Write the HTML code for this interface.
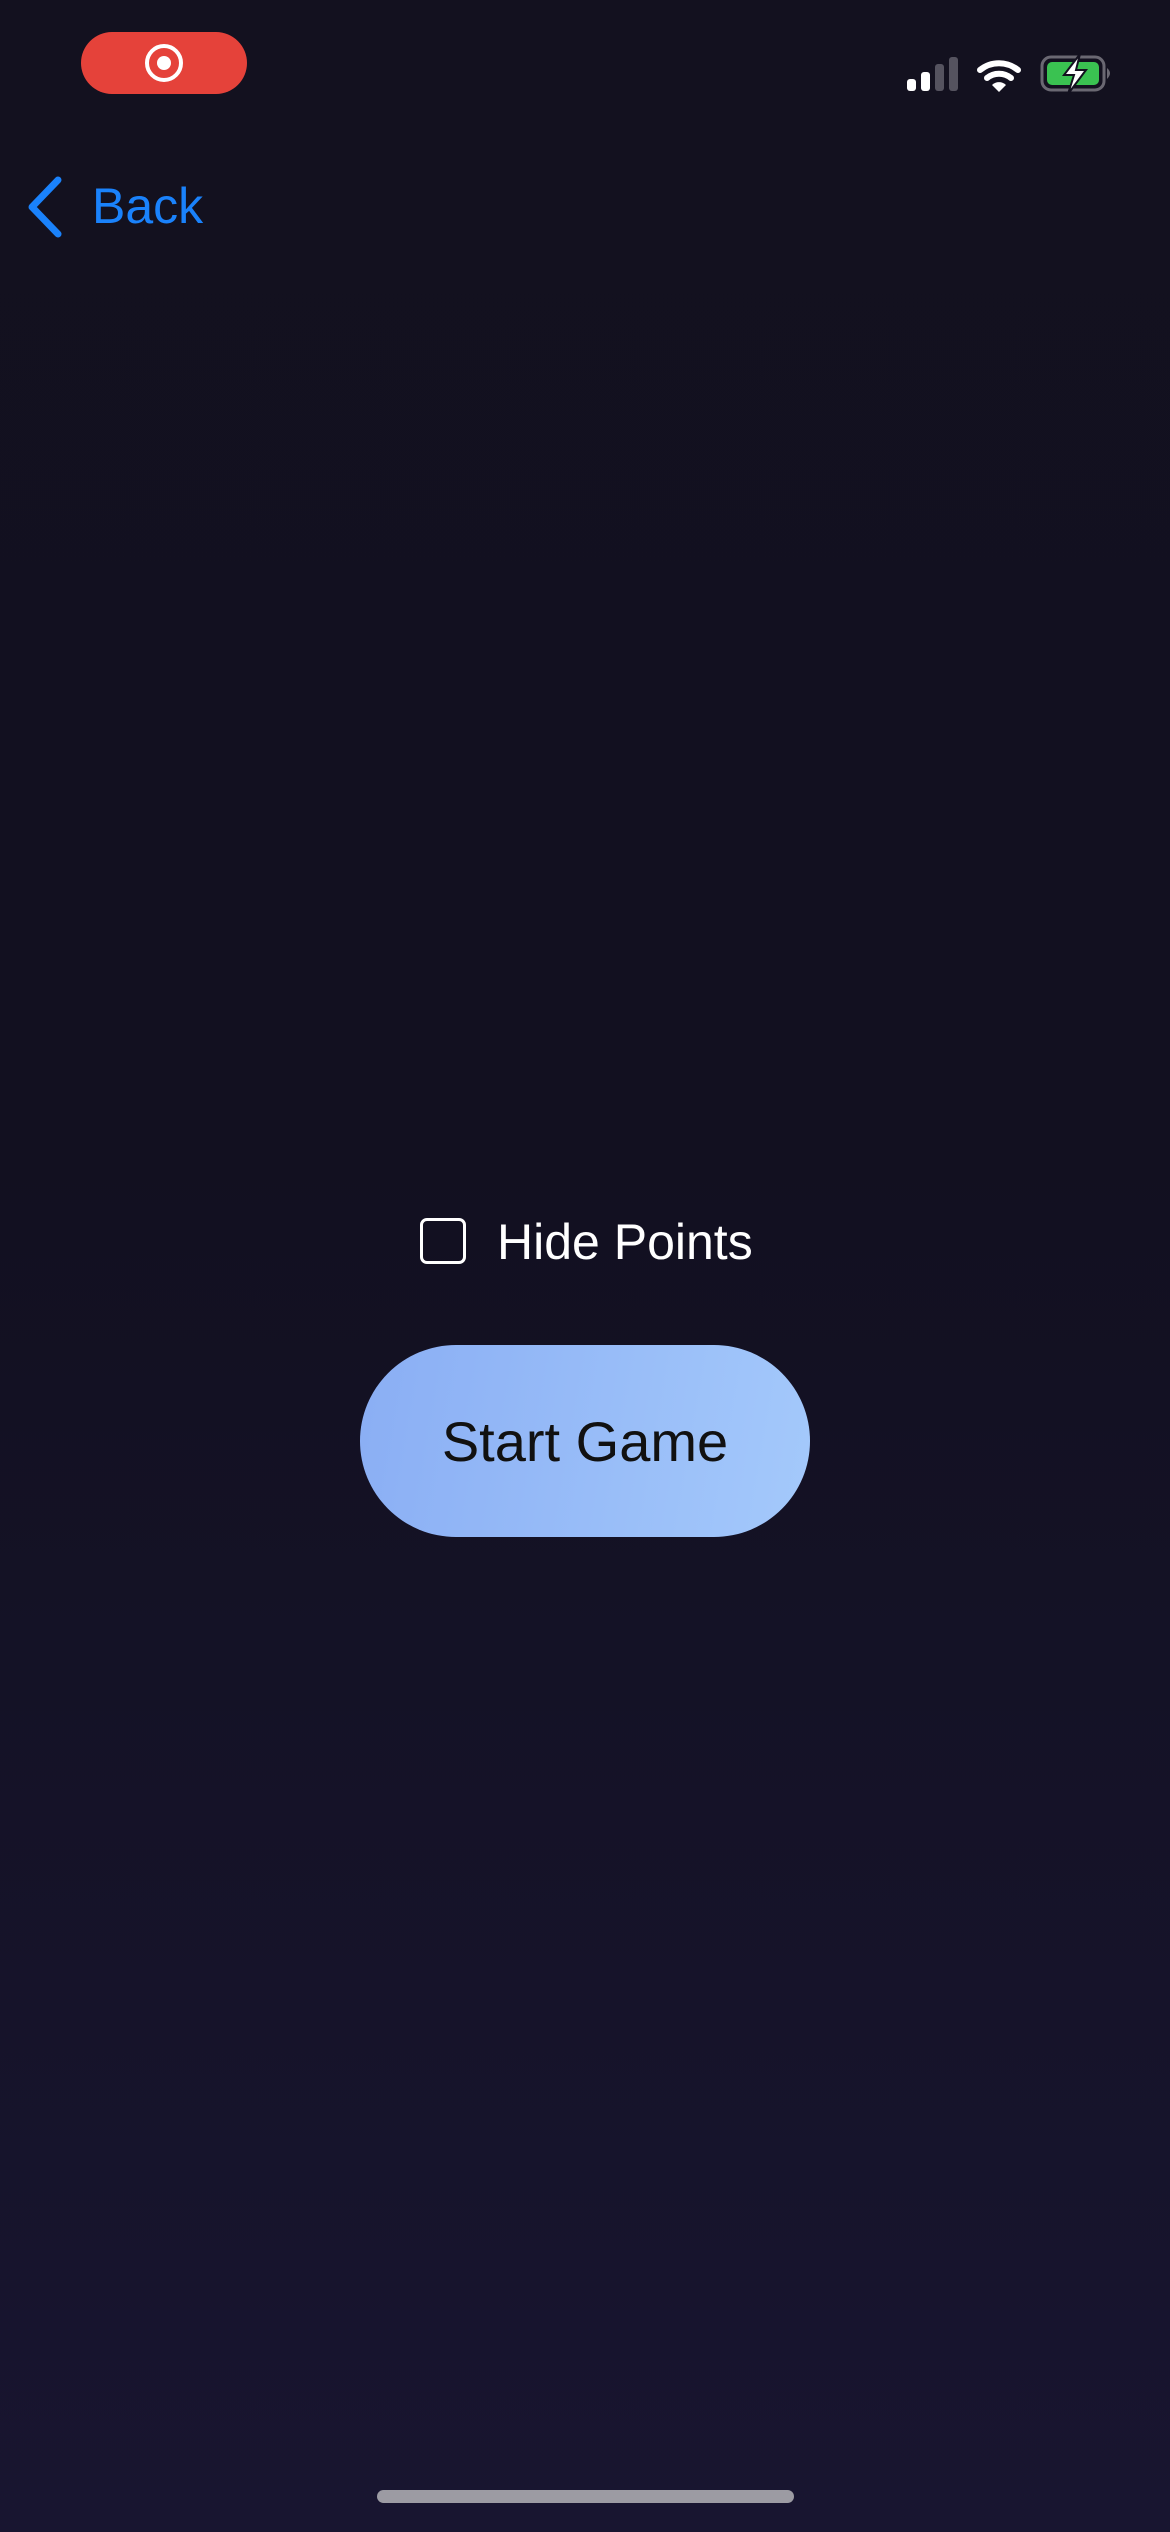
<!DOCTYPE html>
<html><head><meta charset="utf-8"><style>
html,body{margin:0;padding:0}
body{width:1170px;height:2532px;overflow:hidden;position:relative;background:linear-gradient(180deg,#13111f 0%,#121020 45%,#181530 100%);font-family:"Liberation Sans",sans-serif}
.abs{position:absolute}
</style></head><body>
<div class="abs" style="left:81px;top:32px;width:166px;height:62px;border-radius:31px;background:#e5423a"></div>
<svg class="abs" style="left:139px;top:38px" width="50" height="50" viewBox="0 0 50 50"><circle cx="25" cy="25" r="17" fill="none" stroke="#fff" stroke-width="4"/><circle cx="25" cy="25" r="7" fill="#fff"/></svg>
<svg class="abs" style="left:900px;top:50px" width="230" height="50" viewBox="900 50 230 50">
<rect x="907" y="79" width="9" height="12" rx="3" fill="#fff"/>
<rect x="921" y="72" width="9" height="19" rx="3" fill="#fff"/>
<rect x="935" y="64" width="9" height="27" rx="3" fill="#55535f"/>
<rect x="949" y="57" width="9" height="34" rx="3" fill="#55535f"/>
<path d="M980 70 A30 30 0 0 1 1018 70" fill="none" stroke="#fff" stroke-width="6" stroke-linecap="round"/>
<path d="M987 78 A19 19 0 0 1 1011 78" fill="none" stroke="#fff" stroke-width="6" stroke-linecap="round"/>
<path d="M992 85 L999 92 L1006 85 A10 10 0 0 0 992 85Z" fill="#fff"/>
<rect x="1042" y="57" width="62" height="33" rx="9" fill="none" stroke="#6a6872" stroke-width="3"/>
<rect x="1047" y="62" width="52" height="23" rx="5" fill="#3ac251"/>
<path d="M1107 68 q6 5 0 11z" fill="#6a6872"/>
<path d="M1080 54 L1064 75 L1074 75 L1068 94 L1086 70 L1076 70 Z" fill="#fff" stroke="#13111f" stroke-width="2"/>
</svg>
<svg class="abs" style="left:20px;top:172px" width="50" height="70" viewBox="0 0 50 70"><path d="M38 8 L12 35 L38 62" fill="none" stroke="#1a82fb" stroke-width="7" stroke-linecap="round" stroke-linejoin="round"/></svg>
<div class="abs" style="left:92px;top:176px;font-size:50px;color:#1a82fb;line-height:60px">Back</div>
<div class="abs" style="left:420px;top:1218px;width:40px;height:40px;border:3px solid #fff;border-radius:7px"></div>
<div class="abs" style="left:497px;top:1212px;font-size:50px;color:#fff;line-height:60px">Hide Points</div>
<div class="abs" style="left:360px;top:1345px;width:450px;height:192px;border-radius:96px;background:linear-gradient(100deg,#8aaef4,#a4c9fb);display:flex;align-items:center;justify-content:center;font-size:56px;color:#111">Start Game</div>
<div class="abs" style="left:377px;top:2490px;width:417px;height:13px;border-radius:7px;background:#9c9ba3"></div>
</body></html>
